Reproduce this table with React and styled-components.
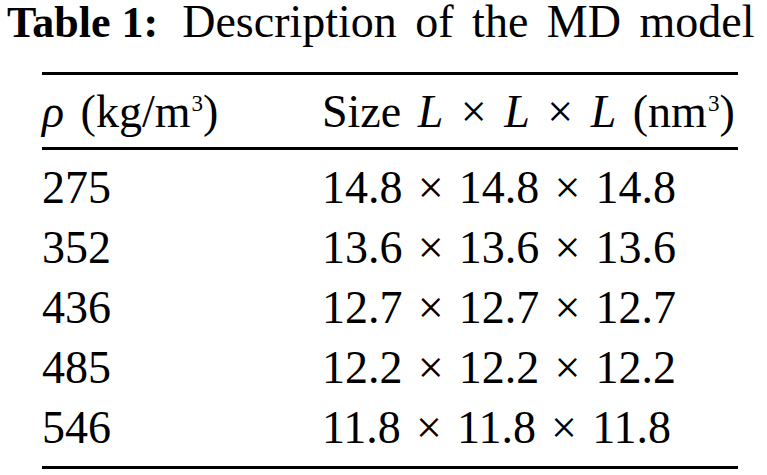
import React from "react";
import styled, { createGlobalStyle } from "styled-components";

const Global = createGlobalStyle`
  html, body { margin: 0; padding: 0; background: #fff; }
  body { font-family: "Liberation Serif", "Times New Roman", serif; color: #000; }
`;

const Page = styled.div`
  width: 767px;
  height: 475px;
  overflow: hidden;
  padding: 0 0 0 7px;
  box-sizing: border-box;
  background: #fff;
`;

const Caption = styled.div`
  font-size: 46px;
  line-height: 44px;
  height: 44px;
  white-space: nowrap;
  word-spacing: 7px;
`;

const Label = styled.span`
  font-weight: bold;
  font-size: 44px;
  word-spacing: 0;
  margin-right: 24px;
`;

const Table = styled.div`
  margin: 28px 0 0 35px;
  width: 696px;
  border-top: 3px solid #000;
  border-bottom: 3px solid #000;
  font-size: 46px;
  word-spacing: 5px;
`;

const Row = styled.div`
  display: grid;
  grid-template-columns: 280px 1fr;
  line-height: 60px;
  height: 60px;
  white-space: nowrap;
`;

const Head = styled.div`
  padding: 7px 0 5px;
  border-bottom: 3px solid #000;
`;

const Body = styled.div`
  padding: 8px 0 8px;
`;

const Cell = styled.div``;

const Var = styled.i`
  font-style: italic;
`;

const Sup = styled.sup`
  font-size: 0.5em;
  vertical-align: 0;
  position: relative;
  top: -0.68em;
  line-height: 0;
  margin-left: 1px;
`;

const Times = styled.span`
  margin: 0 ${(p) => (p.$head ? "0.38em" : "0.33em")};
`;

const rows = [
  ["275", "14.8"],
  ["352", "13.6"],
  ["436", "12.7"],
  ["485", "12.2"],
  ["546", "11.8"],
];

export default function App() {
  return (
    <>
      <Global />
      <Page>
        <Caption>
          <Label>Table 1:</Label>Description of the MD model
        </Caption>
        <Table>
          <Head>
            <Row>
              <Cell>
                <Var>ρ</Var> (kg/m<Sup>3</Sup>)
              </Cell>
              <Cell>
                Size <Var>L</Var>
                <Times $head>×</Times>
                <Var>L</Var>
                <Times $head>×</Times>
                <Var>L</Var> (nm<Sup>3</Sup>)
              </Cell>
            </Row>
          </Head>
          <Body>
            {rows.map(([rho, s]) => (
              <Row key={rho}>
                <Cell>{rho}</Cell>
                <Cell>
                  {s}
                  <Times>×</Times>
                  {s}
                  <Times>×</Times>
                  {s}
                </Cell>
              </Row>
            ))}
          </Body>
        </Table>
      </Page>
    </>
  );
}
